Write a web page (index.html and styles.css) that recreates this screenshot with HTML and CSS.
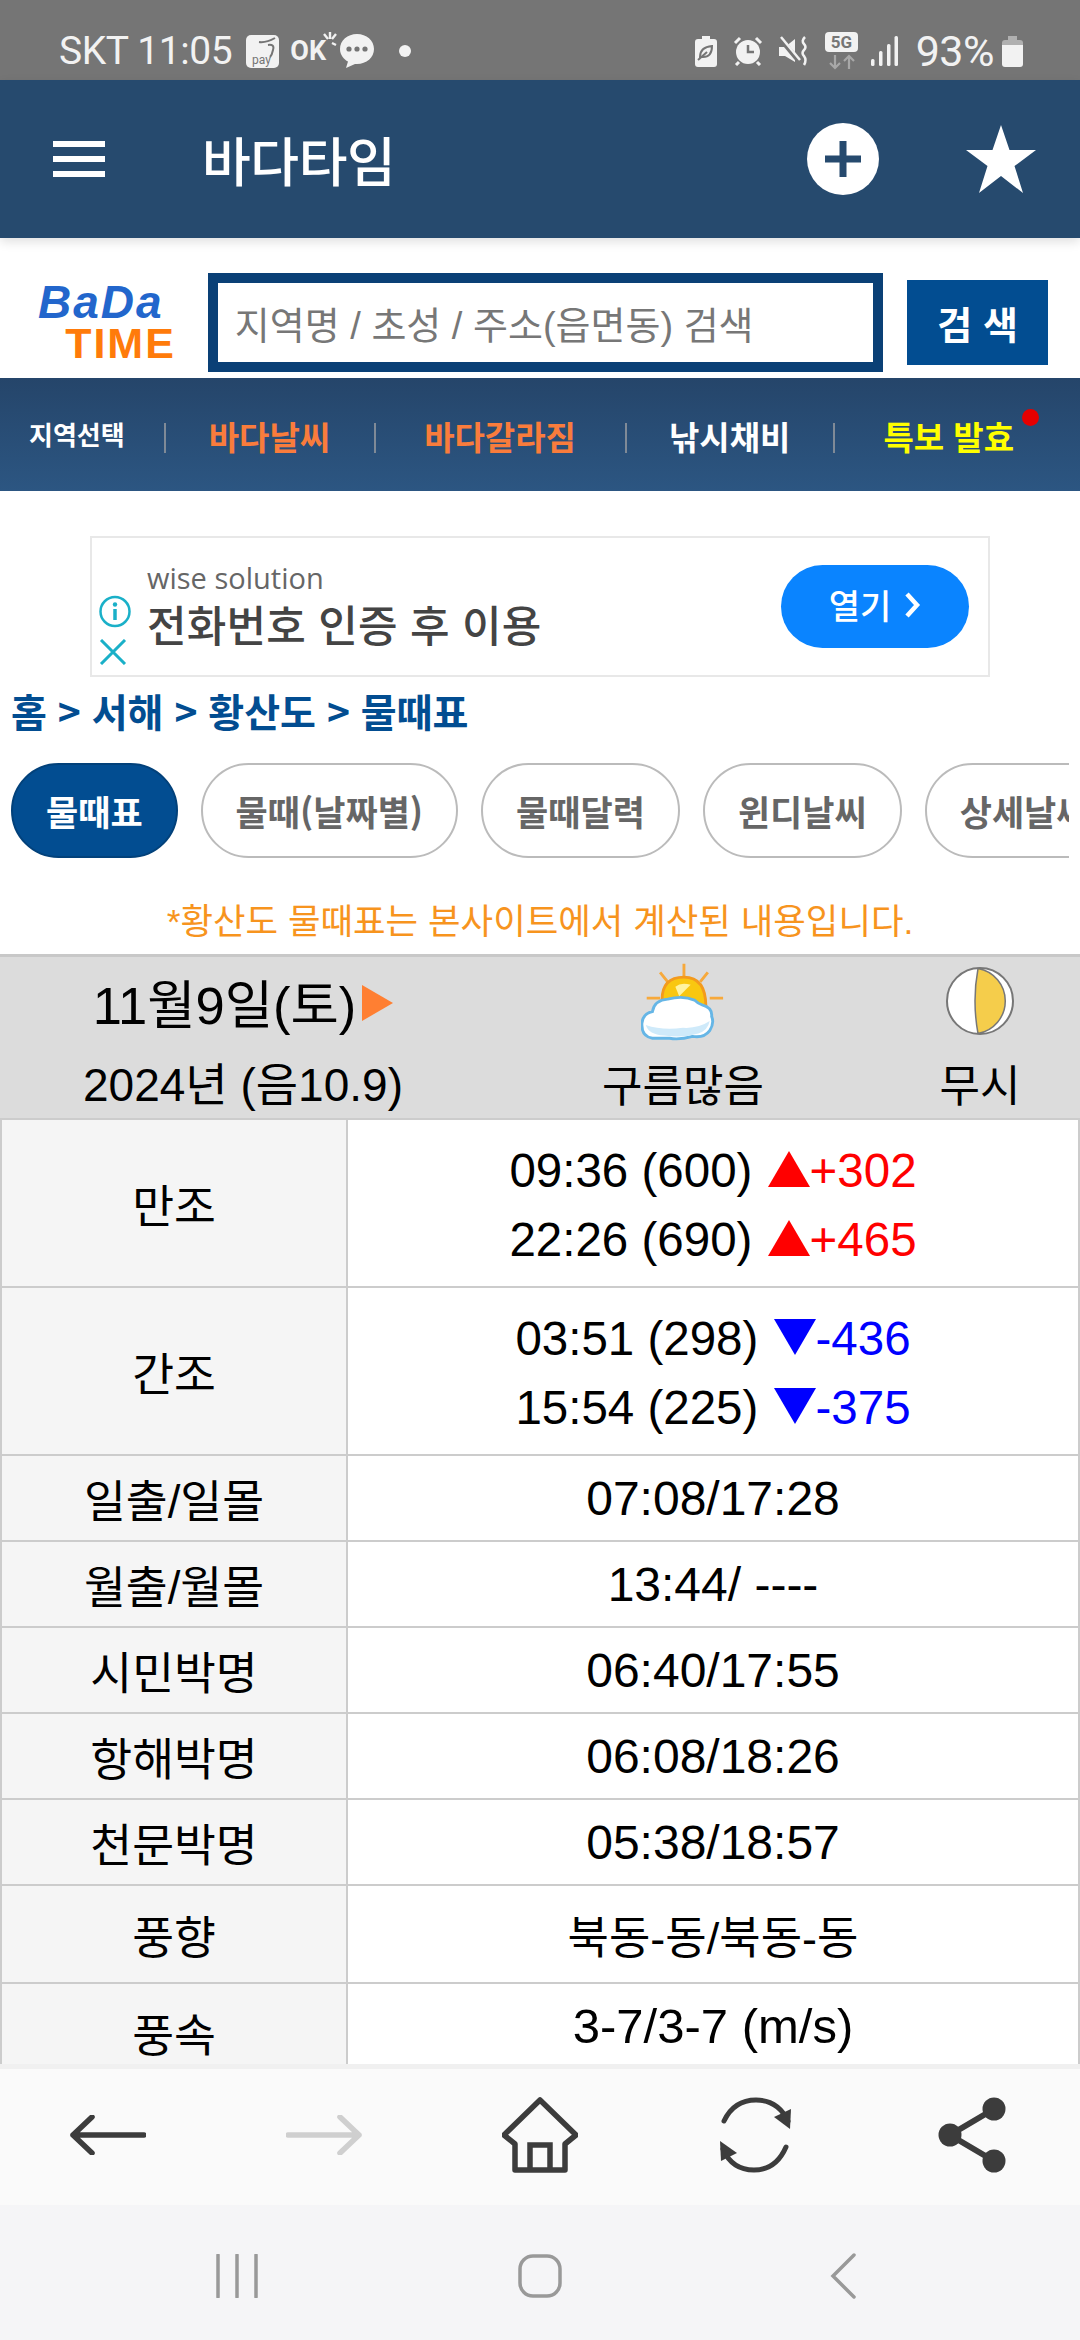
FILE: index.html
```html
<!DOCTYPE html>
<html lang="ko">
<head>
    <meta charset="UTF-8">
    <meta name="viewport" content="width=device-width, initial-scale=1.0">
    <title>바다타임</title>
    <link rel="stylesheet" href="styles.css">
</head>
<body>
<div class="phone">

    <div class="status-bar">
        <span class="status-time">SKT 11:05</span>
        <svg class="st-pay" width="33" height="33" viewBox="0 0 33 33"><rect width="33" height="33" rx="5" fill="#f2f2f2"/><path d="M13 7 Q20 8 29 3 M22 10 Q29 9 27 15 Q26 20 24 22" fill="none" stroke="#757575" stroke-width="2"/><text x="6" y="29" font-size="12" fill="#757575" font-family="Roboto, sans-serif">pay</text></svg>
        <span class="st-ok">OK<svg width="14" height="20" viewBox="0 0 14 20"><path d="M7 0V7M1 2L5 7M13 2L9 7M9 11L13 13" stroke="#f2f2f2" stroke-width="2.4" fill="none"/></svg></span>
        <svg class="st-chat" width="36" height="36" viewBox="0 0 36 36"><path d="M18 1C8.500 1 1 7.500 1 16C1 22 5 26.500 9 28.500L7 35L16 31H18C27.500 31 35 24.500 35 16C35 7.500 27.500 1 18 1Z" fill="#f2f2f2"/><circle cx="10" cy="16" r="2.600" fill="#757575"/><circle cx="18" cy="16" r="2.600" fill="#757575"/><circle cx="26" cy="16" r="2.600" fill="#757575"/></svg>
        <span class="st-dot"></span>
        <span class="status-gap"></span>
        <svg class="st-icon" width="22" height="31" viewBox="0 0 22 31"><path d="M7 0H15V3H19Q22 3 22 6V28Q22 31 19 31H3Q0 31 0 28V6Q0 3 3 3H7Z" fill="#f2f2f2"/><path d="M5 21Q5 11 17 10Q17 21 8 21Z" fill="none" stroke="#757575" stroke-width="2"/><path d="M3 24L12 16" stroke="#757575" stroke-width="2"/></svg>
        <svg class="st-icon" width="30" height="30" viewBox="0 0 30 30"><circle cx="15" cy="16" r="12" fill="#f2f2f2"/><path d="M15 9V16H21" fill="none" stroke="#757575" stroke-width="2.500"/><path d="M2 7L7 2M28 7L23 2M6 26L3 29M24 26L27 29" stroke="#f2f2f2" stroke-width="3"/></svg>
        <svg class="st-icon" width="30" height="30" viewBox="0 0 30 30"><path d="M0 11H6L16 3V26L6 20H0Z" fill="#f2f2f2"/><path d="M0 1L19 24" stroke="#757575" stroke-width="5"/><path d="M2 1L21 24" stroke="#f2f2f2" stroke-width="2.500"/><path d="M26 1Q22 5 25 8Q28 11 25 14Q22 17 25 20Q28 24 25 29" fill="none" stroke="#f2f2f2" stroke-width="2.500"/></svg>
        <svg class="st-icon" width="33" height="38" viewBox="0 0 33 38"><rect width="33" height="20" rx="4" fill="#f2f2f2"/><text x="16.500" y="16" text-anchor="middle" font-size="17" font-weight="700" fill="#757575" font-family="Roboto, sans-serif">5G</text><path d="M10 23V36M5 31L10 36L15 31" fill="none" stroke="#a8a8a8" stroke-width="2.200"/><path d="M24 37V24M19 29L24 24L29 29" fill="none" stroke="#a8a8a8" stroke-width="2.200"/></svg>
        <svg class="st-icon st-signal" width="27" height="30" viewBox="0 0 27 30"><g fill="#f2f2f2"><rect x="0" y="23" width="3.500" height="7" rx="1.500"/><rect x="8" y="15" width="3.500" height="15" rx="1.500"/><rect x="16" y="8" width="3.500" height="22" rx="1.500"/><rect x="23.500" y="0" width="3.500" height="30" rx="1.500"/></g></svg>
        <span class="status-batt">93%</span>
        <svg class="st-batt" width="21" height="31" viewBox="0 0 21 31"><path d="M6 0H15V4H6Z" fill="#b0b0b0"/><path d="M3 4H18Q21 4 21 7V9H0V7Q0 4 3 4Z" fill="#b0b0b0"/><path d="M0 9H21V28Q21 31 18 31H3Q0 31 0 28Z" fill="#f2f2f2"/></svg>
    </div>

    <header class="app-bar">
        <div class="hamburger"><i></i><i></i><i></i></div>
        <div class="app-title">바다타임</div>
        <svg class="app-plus" width="72" height="72" viewBox="0 0 72 72"><circle cx="36" cy="36" r="36" fill="#fff"/><path d="M36 18V54M18 36H54" stroke="#264a6e" stroke-width="7"/></svg>
        <svg class="app-star" width="70" height="68" viewBox="0 0 70 68"><path d="M35 0L43.500 25H70L48.500 41L57 68L35 51L13 68L21.500 41L0 25H26.500Z" fill="#fff"/></svg>
    </header>

    <div class="search-row">
        <div class="logo">
            <span class="logo-bada">BaDa</span>
            <span class="logo-time">TIME</span>
        </div>
        <div class="search-box">지역명 / 초성 / 주소(읍면동) 검색</div>
        <div class="search-btn">검 색</div>
    </div>

    <nav class="main-nav">
        <span class="nav-item nav-small">지역선택</span>
        <span class="nav-sep"></span>
        <span class="nav-item nav-orange">바다날씨</span>
        <span class="nav-sep"></span>
        <span class="nav-item nav-orange">바다갈라짐</span>
        <span class="nav-sep"></span>
        <span class="nav-item">낚시채비</span>
        <span class="nav-sep"></span>
        <span class="nav-item nav-yellow">특보 발효<i class="nav-badge"></i></span>
    </nav>

    <main class="content">
        <div class="ad">
            <div class="ad-marks">
                <svg width="32" height="33" viewBox="0 0 32 33"><circle cx="16" cy="16.500" r="14.500" fill="none" stroke="#1ab0c8" stroke-width="2.500"/><circle cx="16" cy="9.500" r="2.200" fill="#1ab0c8"/><path d="M16 14V25" stroke="#1ab0c8" stroke-width="3.500"/></svg>
                <svg width="28" height="26" viewBox="0 0 28 26"><path d="M2 1L26 25M26 1L2 25" stroke="#1ab0c8" stroke-width="3"/></svg>
            </div>
            <div class="ad-text">
                <div class="ad-sub">wise solution</div>
                <div class="ad-main">전화번호 인증 후 이용</div>
            </div>
            <div class="ad-open">열기<svg width="18" height="28" viewBox="0 0 18 28"><path d="M4 3L14 14L4 25" fill="none" stroke="#fff" stroke-width="4.500"/></svg></div>
        </div>

        <div class="breadcrumb">홈 &gt; 서해 &gt; 황산도 &gt; 물때표</div>

        <div class="tabs">
            <span class="tab tab-active">물때표</span>
            <span class="tab">물때(날짜별)</span>
            <span class="tab">물때달력</span>
            <span class="tab">윈디날씨</span>
            <span class="tab">상세날씨</span>
        </div>

        <p class="note">*황산도 물때표는 본사이트에서 계산된 내용입니다.</p>

        <section class="day-head">
            <div class="day-date">
                <div class="day-main">11월9일(토)<i class="day-next"></i></div>
                <div class="day-sub">2024년 (음10.9)</div>
            </div>
            <div class="day-col">
                <svg class="day-icon" width="84" height="80" viewBox="0 0 88 80">
                    <path d="M45 0V13M20 9L28 19M70 9L62 19M72 36H86M6 36H20" stroke="#f7a93b" stroke-width="3"/>
                    <path d="M22 38Q22 14 45 14Q68 14 68 45H22Z" fill="#f9c710" stroke="#f39a1d" stroke-width="3"/>
                    <path d="M36 24Q42 19 52 22L40 34Z" fill="#fff3a0"/>
                    <path d="M12 78Q0 76 1 62Q2 52 12 50Q14 38 28 37Q44 33 56 38Q60 42 64 43Q75 46 74 55Q77 62 72 70Q66 78 54 76Q40 80 30 78Z" fill="#fff" stroke="#66b6e6" stroke-width="3"/>
                    <path d="M5 64Q8 74 24 75Q44 78 60 73Q70 70 72 60Q60 68 44 67Q22 70 5 64Z" fill="#cfeafa"/>
                </svg>
                <div class="day-sub">구름많음</div>
            </div>
            <div class="day-col">
                <svg class="day-icon moon" width="68" height="68" viewBox="0 0 68 68"><circle cx="34" cy="34" r="33" fill="#fff" stroke="#777" stroke-width="2"/><path d="M32 1.500A33 33 0 0 1 32 66.500Q26 34 32 1.500Z" fill="#f5cd4b" stroke="#777" stroke-width="1.500"/></svg>
                <div class="day-sub">무시</div>
            </div>
        </section>

        <table class="tide-table">
            <tr class="row-tall">
                <th>만조</th>
                <td>
                    <div class="tide-line">09:36 (600) <span class="up"><i class="tri-up"></i>+302</span></div>
                    <div class="tide-line">22:26 (690) <span class="up"><i class="tri-up"></i>+465</span></div>
                </td>
            </tr>
            <tr class="row-tall">
                <th>간조</th>
                <td>
                    <div class="tide-line">03:51 (298) <span class="down"><i class="tri-down"></i>-436</span></div>
                    <div class="tide-line">15:54 (225) <span class="down"><i class="tri-down"></i>-375</span></div>
                </td>
            </tr>
            <tr><th>일출/일몰</th><td>07:08/17:28</td></tr>
            <tr><th>월출/월몰</th><td>13:44/ ----</td></tr>
            <tr><th>시민박명</th><td>06:40/17:55</td></tr>
            <tr><th>항해박명</th><td>06:08/18:26</td></tr>
            <tr><th>천문박명</th><td>05:38/18:57</td></tr>
            <tr class="row-wind"><th>풍향</th><td>북동-동/북동-동</td></tr>
            <tr class="row-wind row-last"><th>풍속</th><td>3-7/3-7 (m/s)</td></tr>
        </table>
    </main>

    <div class="toolbar">
        <svg width="76" height="40" viewBox="0 0 76 40"><path d="M22 2L3 20L22 38M3 20H74" fill="none" stroke="#3c3c3c" stroke-width="5.500" stroke-linecap="round" stroke-linejoin="round"/></svg>
        <svg width="76" height="40" viewBox="0 0 76 40"><path d="M54 2L73 20L54 38M73 20H2" fill="none" stroke="#cfcfcf" stroke-width="5.500" stroke-linecap="round" stroke-linejoin="round"/></svg>
        <svg width="76" height="76" viewBox="0 0 76 76"><path d="M38 3L74 38L63 47V73H13V47L2 38Z" fill="none" stroke="#3c3c3c" stroke-width="5.500" stroke-linejoin="round"/><path d="M28 73V48H48V73" fill="none" stroke="#3c3c3c" stroke-width="5.500"/></svg>
        <svg width="76" height="76" viewBox="0 0 76 76"><path d="M6 24Q16 3 38 3Q60 3 70 24" fill="none" stroke="#3c3c3c" stroke-width="5" stroke-linecap="round"/><path d="M72 32L56 20L73 12Z" fill="#3c3c3c"/><path d="M68 50Q58 73 36 73Q14 73 5 52" fill="none" stroke="#3c3c3c" stroke-width="5" stroke-linecap="round"/><path d="M2 44L19 56L3 64Z" fill="#3c3c3c"/></svg>
        <svg width="68" height="76" viewBox="0 0 68 76"><path d="M56 12L12 38L56 64" fill="none" stroke="#3c3c3c" stroke-width="6"/><circle cx="56" cy="12" r="11.500" fill="#3c3c3c"/><circle cx="12" cy="38" r="11.500" fill="#3c3c3c"/><circle cx="56" cy="64" r="11.500" fill="#3c3c3c"/></svg>
    </div>

    <div class="sys-nav">
        <svg width="42" height="44" viewBox="0 0 42 44"><path d="M2 1V43M21 1V43M40 1V43" stroke="#999" stroke-width="3.500" stroke-linecap="round"/></svg>
        <svg width="44" height="44" viewBox="0 0 44 44"><rect x="2" y="2" width="40" height="40" rx="13" fill="none" stroke="#999" stroke-width="3.500"/></svg>
        <svg width="26" height="46" viewBox="0 0 26 46"><path d="M24 2L3 23L24 44" fill="none" stroke="#999" stroke-width="3.500" stroke-linecap="round"/></svg>
    </div>

</div>
</body>
</html>
```

FILE: styles.css
```css
* {
    box-sizing: border-box;
}
body {
    margin: 0;
    font-family: "Liberation Sans", "Noto Sans CJK KR", sans-serif;
    background-color: #fff;
    color: #000;
}
.phone {
    width: 1080px;
    height: 2340px;
    display: flex;
    flex-direction: column;
    overflow: hidden;
}

/* status bar */
.status-bar {
    height: 80px;
    flex: none;
    background-color: #757575;
    color: #f2f2f2;
    display: flex;
    align-items: center;
    padding: 22px 57px 0 59px;
    font-family: Roboto, sans-serif;
}
.status-time {
    font-size: 39px;
    letter-spacing: -0.4px;
}
.st-pay {
    margin-left: 14px;
}
.st-ok {
    margin-left: 11px;
    font-size: 27px;
    font-weight: 700;
    display: flex;
    align-items: flex-start;
    line-height: 26px;
}
.st-ok svg {
    margin: -6px 0 0 -3px;
}
.st-chat {
    margin-left: 2px;
}
.st-dot {
    width: 12px;
    height: 12px;
    margin-left: 24px;
    border-radius: 50%;
    background-color: #f2f2f2;
}
.status-gap {
    flex: 1;
}
.st-icon {
    margin-left: 16px;
}
.st-signal {
    margin-left: 13px;
}
.status-batt {
    margin-left: 18px;
    font-size: 43px;
    letter-spacing: -0.5px;
}
.st-batt {
    margin-left: 8px;
}

/* app bar */
.app-bar {
    height: 158px;
    flex: none;
    background-color: #264a6e;
    display: flex;
    align-items: center;
    position: relative;
    box-shadow: 0 4px 10px rgba(0, 0, 0, 0.12);
    padding-left: 53px;
}
.hamburger {
    width: 52px;
    display: flex;
    flex-direction: column;
    gap: 9px;
}
.hamburger i {
    display: block;
    height: 6px;
    background-color: #fff;
}
.app-title {
    margin-left: 97px;
    color: #fff;
    font-size: 53px;
    font-weight: 500;
    letter-spacing: -0.4px;
    font-family: "Noto Sans CJK KR", sans-serif;
}
.app-plus {
    margin-left: auto;
}
.app-star {
    margin: 0 44px 0 87px;
}

/* search */
.search-row {
    height: 140px;
    flex: none;
    padding: 29px 32px 0 38px;
    display: flex;
    align-items: center;
}
.logo {
    width: 138px;
    display: flex;
    flex-direction: column;
    line-height: 1;
}
.logo-bada {
    color: #2266cc;
    font-family: "Liberation Sans", sans-serif;
    font-style: italic;
    font-weight: 700;
    font-size: 46px;
    line-height: 40px;
    letter-spacing: 2px;
}
.logo-time {
    color: #ff7b0a;
    font-weight: 700;
    font-size: 43px;
    line-height: 42px;
    letter-spacing: 2px;
    text-align: right;
}
.search-box {
    width: 676px;
    height: 99px;
    margin-left: 32px;
    border: 10px solid #0a4076;
    padding-left: 17px;
    display: flex;
    align-items: center;
    color: #777;
    font-size: 38px;
}
.search-btn {
    width: 141px;
    height: 85px;
    margin-left: 24px;
    background-color: #024d91;
    color: #fff;
    font-size: 38px;
    font-weight: 700;
    display: flex;
    align-items: center;
    justify-content: center;
    font-family: "Noto Sans CJK KR", sans-serif;
}

/* main nav */
.main-nav {
    height: 113px;
    flex: none;
    background: linear-gradient(#25456a, #2c5682);
    padding: 2px 0 0 29px;
    display: flex;
    align-items: center;
    color: #fff;
    font-family: "Noto Sans CJK KR", sans-serif;
    font-weight: 700;
}
.nav-item {
    font-size: 33px;
    position: relative;
    white-space: nowrap;
}
.nav-small {
    font-size: 26px;
    margin-top: -5px;
}
.nav-orange {
    color: #f97c3c;
}
.nav-yellow {
    color: #ffff00;
}
.nav-sep {
    width: 2px;
    height: 30px;
    background-color: #7f8a97;
}
.nav-sep:nth-child(2) {
    margin: 4px 43px 0 39px;
}
.nav-sep:nth-child(4) {
    margin: 4px 48px 0 44px;
}
.nav-sep:nth-child(6) {
    margin: 4px 42px 0 49px;
}
.nav-sep:nth-child(8) {
    margin: 4px 48px 0 43px;
}
.nav-badge {
    position: absolute;
    right: -25px;
    top: -3px;
    width: 17px;
    height: 17px;
    border-radius: 50%;
    background-color: #e60000;
}

/* content */
.content {
    flex: 1;
    min-height: 0;
    overflow: hidden;
    padding-top: 45px;
    font-family: "Liberation Sans", "Noto Sans CJK KR", sans-serif;
}
.ad {
    width: 900px;
    height: 141px;
    margin-left: 90px;
    border: 2px solid #e8e8e8;
    display: flex;
    align-items: flex-end;
    position: relative;
}
.ad-marks {
    width: 55px;
    padding: 0 0 10px 7px;
    display: flex;
    flex-direction: column;
    gap: 11px;
    align-items: flex-start;
}
.ad-text {
    align-self: flex-start;
    padding-top: 22px;
}
.ad-sub {
    color: #666;
    font-family: "Open Sans", sans-serif;
    font-size: 29px;
    line-height: 36px;
}
.ad-main {
    color: #444;
    font-size: 43px;
    font-weight: 500;
    line-height: 54px;
    font-family: "Noto Sans CJK KR", sans-serif;
    letter-spacing: 0.2px;
}
.ad-open {
    position: absolute;
    right: 19px;
    top: 27px;
    width: 188px;
    height: 83px;
    border-radius: 42px;
    background-color: #0a84ff;
    color: #fff;
    font-size: 34px;
    padding-bottom: 4px;
    font-family: "Noto Sans CJK KR", sans-serif;
    font-weight: 500;
    display: flex;
    align-items: center;
    justify-content: center;
    gap: 12px;
}
.breadcrumb {
    height: 66px;
    padding-left: 11px;
    color: #024d91;
    font-size: 39px;
    font-weight: 700;
    line-height: 66px;
    font-family: "Noto Sans CJK KR", sans-serif;
}
.tabs {
    margin: 20px 11px 0;
    height: 95px;
    display: flex;
    gap: 23px;
    overflow: hidden;
}
.tab {
    flex: none;
    height: 95px;
    padding: 0 33px;
    border: 2px solid #bbb;
    border-radius: 48px;
    color: #666;
    font-size: 35px;
    font-weight: 700;
    display: flex;
    align-items: center;
    font-family: "Noto Sans CJK KR", sans-serif;
}
.tab-active {
    background-color: #024d91;
    border-color: #02417a;
    color: #fff;
}
.note {
    margin: 0;
    height: 96px;
    line-height: 128px;
    text-align: center;
    color: #f7941e;
    font-size: 35.4px;
}
.day-head {
    height: 164px;
    background-color: #dcdcdc;
    border-top: 3px solid #c8c8c8;
    display: grid;
    grid-template-columns: 486px 394px 200px;
}
.day-date,
.day-col {
    display: flex;
    flex-direction: column;
    align-items: center;
}
.day-date {
    padding-top: 11px;
}
.day-main {
    display: flex;
    align-items: center;
    height: 66px;
    font-size: 52.5px;
}
.day-next {
    width: 0;
    height: 0;
    margin: 3px 0 0 6px;
    border-left: 31px solid #ff7f32;
    border-top: 18px solid transparent;
    border-bottom: 18px solid transparent;
}
.day-sub {
    font-size: 44px;
    line-height: 62px;
}
.day-date .day-sub {
    margin-top: 20px;
    font-size: 46px;
}
.day-icon {
    margin-top: 5px;
    height: 80px;
    display: block;
    margin-bottom: 14px;
}
.moon {
    height: 68px;
    margin-top: 10px;
    margin-bottom: 21px;
}

/* tide table */
.tide-table {
    width: 1080px;
    table-layout: fixed;
    border-collapse: collapse;
    font-size: 48px;
}
.tide-table th,
.tide-table td {
    border: 2px solid #ccc;
    height: 86px;
    padding: 0;
    text-align: center;
    font-weight: 400;
}
.tide-table th {
    width: 346px;
    background-color: #f5f5f5;
    font-size: 45.5px;
}
.row-tall th,
.row-tall td {
    height: 168px;
}
.row-tall td {
    padding-top: 4px;
}
.row-wind th,
.row-wind td {
    height: 98px;
}
.row-wind td {
    font-size: 45px;
}
.tide-table .row-last td {
    padding-bottom: 12px;
    font-size: 49px;
}
.tide-line {
    line-height: 69px;
    font-size: 47.5px;
}
.up {
    color: #f00;
}
.down {
    color: #00f;
}
.tri-up,
.tri-down {
    display: inline-block;
    width: 0;
    height: 0;
    margin-left: 2px;
    border-left: 21px solid transparent;
    border-right: 21px solid transparent;
}
.tri-up {
    border-bottom: 36px solid #f00;
}
.tri-down {
    border-top: 36px solid #00f;
}

/* bottom toolbars */
.toolbar {
    height: 141px;
    flex: none;
    background-color: #fafafa;
    border-top: 5px solid #f0f0f0;
    padding-bottom: 4px;
    display: grid;
    grid-template-columns: repeat(5, 1fr);
    justify-items: center;
    align-items: center;
}
.sys-nav {
    height: 135px;
    flex: none;
    background-color: #f5f5f7;
    padding: 7px 85px 0;
    display: grid;
    grid-template-columns: repeat(3, 1fr);
    justify-items: center;
    align-items: center;
}
```
